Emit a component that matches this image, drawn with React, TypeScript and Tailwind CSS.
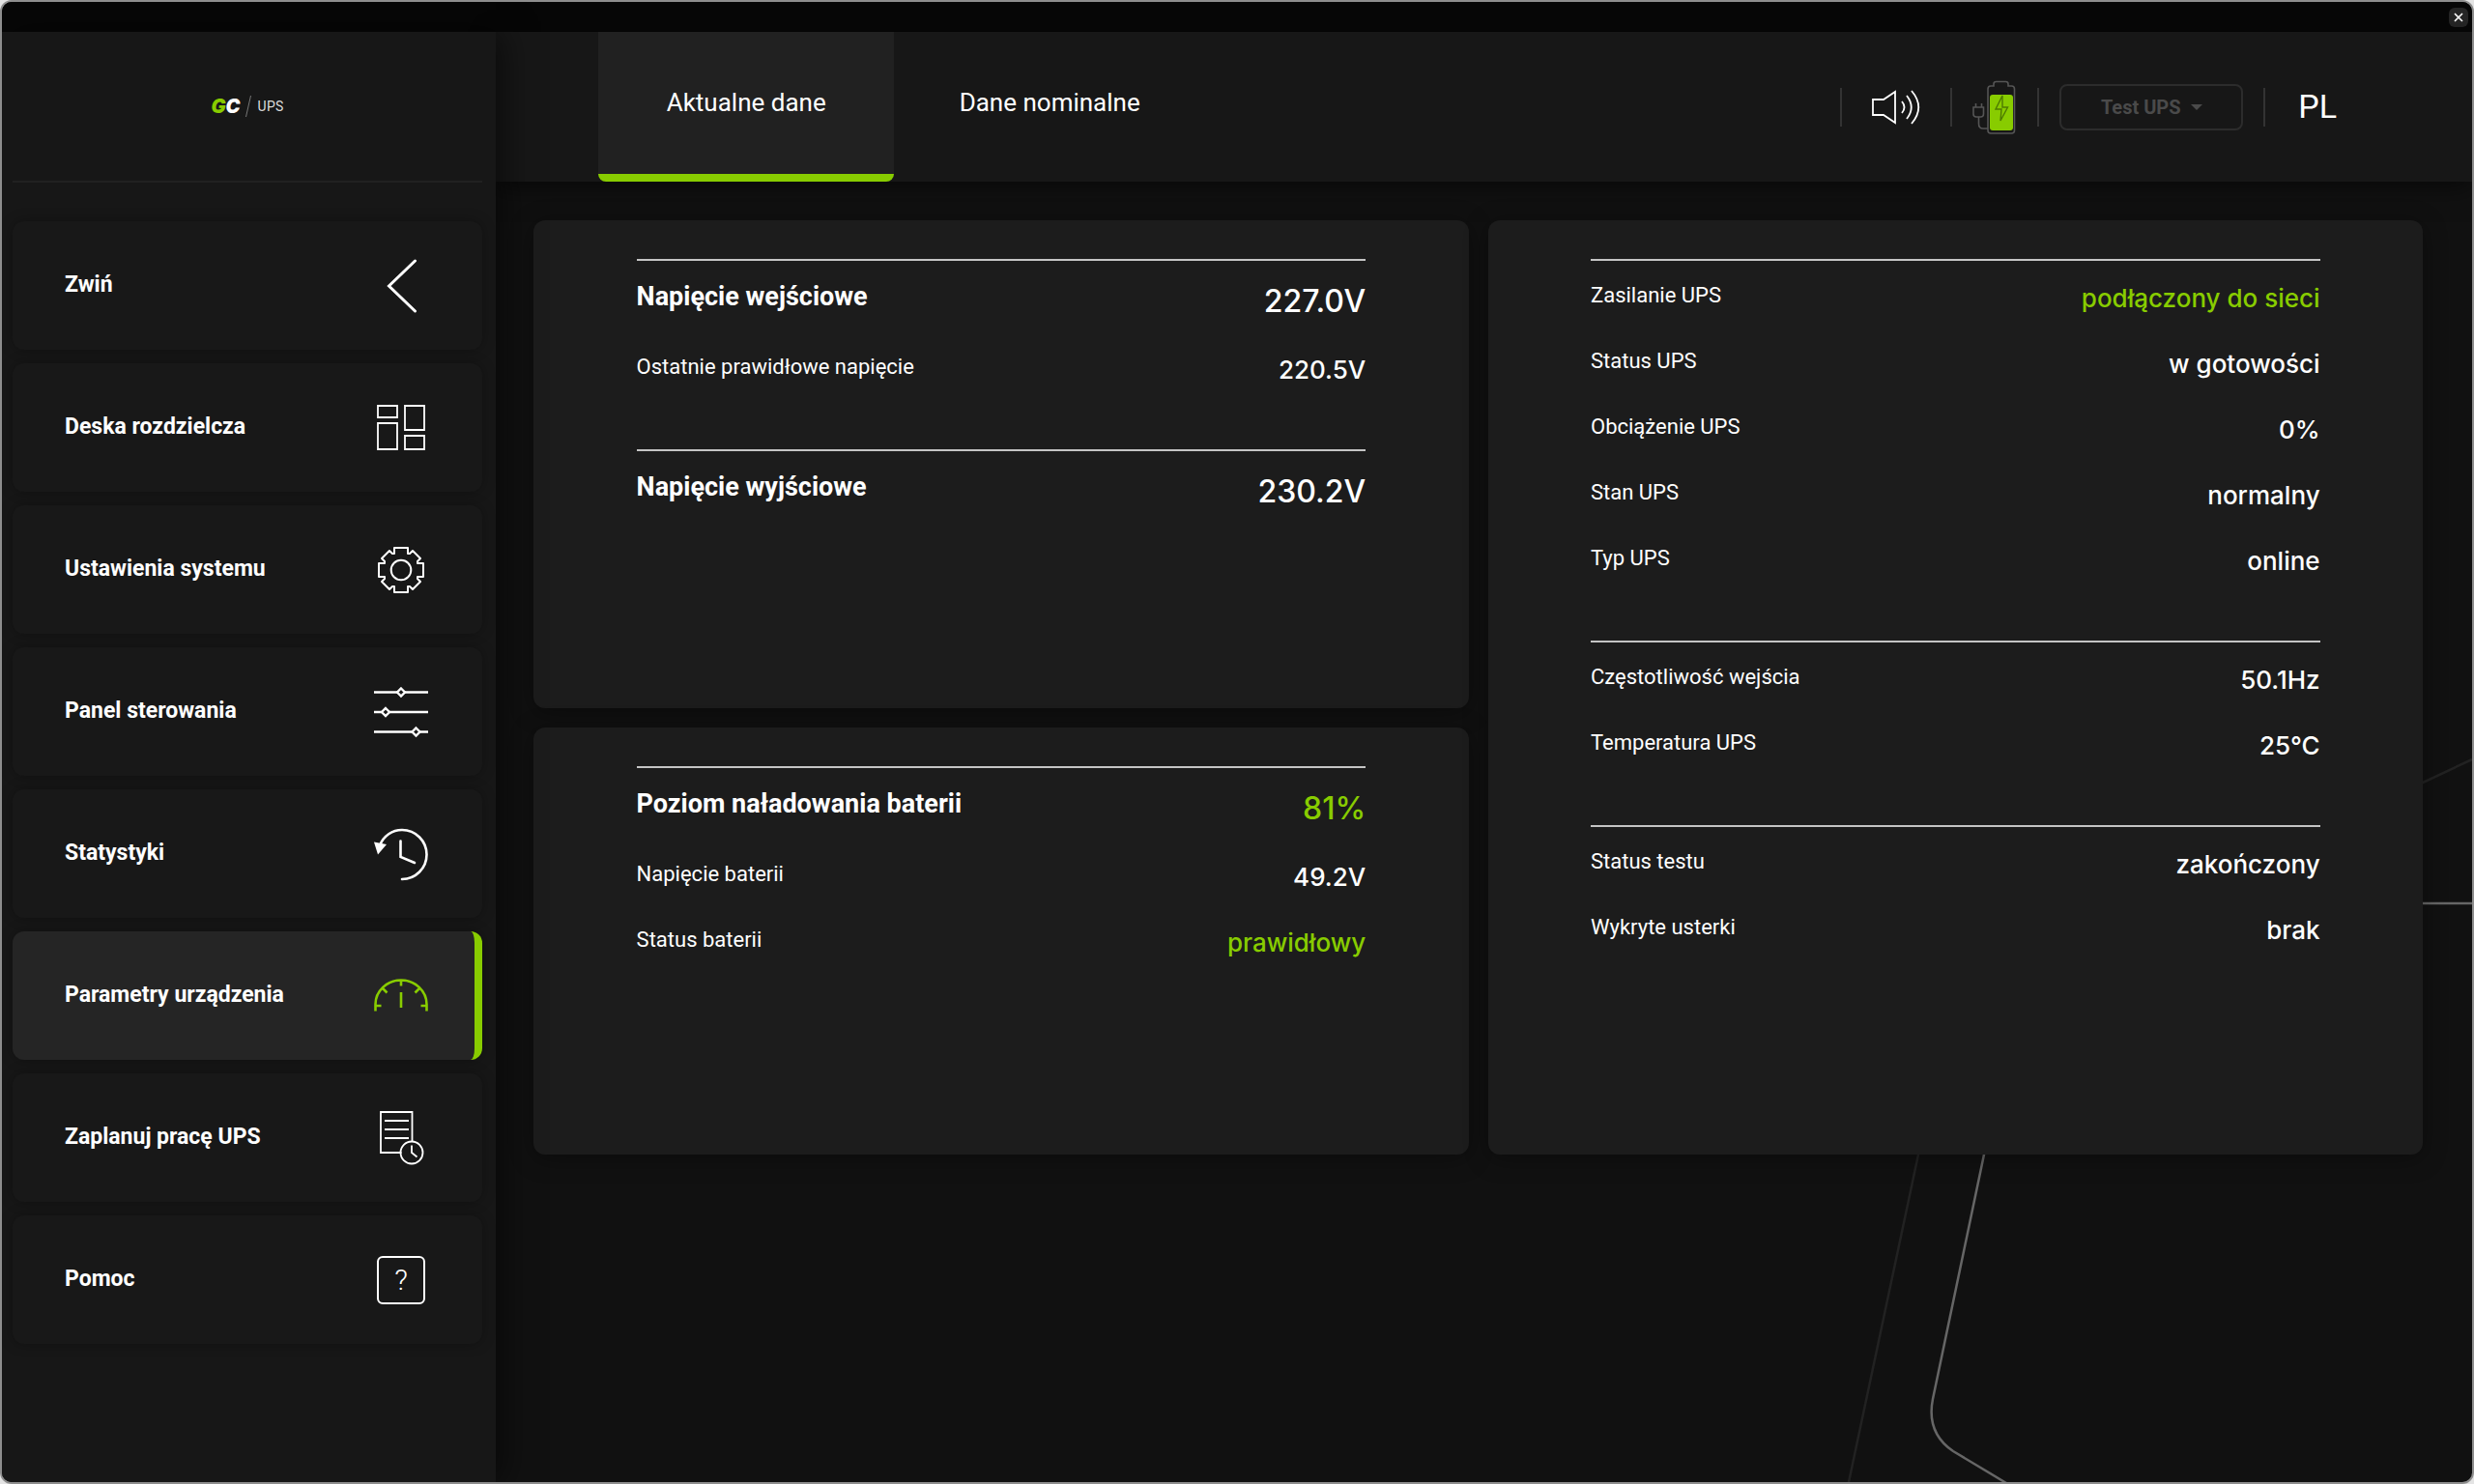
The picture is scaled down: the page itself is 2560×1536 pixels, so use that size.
import clsx from 'clsx'
import type { ReactNode } from 'react'

const navigation = [
  { name: 'Zwiń', icon: <CollapseIcon />, current: false },
  { name: 'Deska rozdzielcza', icon: <DashboardIcon />, current: false },
  { name: 'Ustawienia systemu', icon: <GearIcon />, current: false },
  { name: 'Panel sterowania', icon: <SlidersIcon />, current: false },
  { name: 'Statystyki', icon: <HistoryIcon />, current: false },
  { name: 'Parametry urządzenia', icon: <GaugeIcon />, current: true },
  { name: 'Zaplanuj pracę UPS', icon: <ScheduleIcon />, current: false },
  { name: 'Pomoc', icon: <HelpIcon />, current: false },
]

const tabs = [
  { name: 'Aktualne dane', current: true },
  { name: 'Dane nominalne', current: false },
]

type RowData = { label: string; value: string; title?: boolean; ok?: boolean }

const voltage: RowData[][] = [
  [
    { label: 'Napięcie wejściowe', value: '227.0V', title: true },
    { label: 'Ostatnie prawidłowe napięcie', value: '220.5V' },
  ],
  [{ label: 'Napięcie wyjściowe', value: '230.2V', title: true }],
]

const battery: RowData[][] = [
  [
    { label: 'Poziom naładowania baterii', value: '81%', title: true, ok: true },
    { label: 'Napięcie baterii', value: '49.2V' },
    { label: 'Status baterii', value: 'prawidłowy', ok: true },
  ],
]

const status: RowData[][] = [
  [
    { label: 'Zasilanie UPS', value: 'podłączony do sieci', ok: true },
    { label: 'Status UPS', value: 'w gotowości' },
    { label: 'Obciążenie UPS', value: '0%' },
    { label: 'Stan UPS', value: 'normalny' },
    { label: 'Typ UPS', value: 'online' },
  ],
  [
    { label: 'Częstotliwość wejścia', value: '50.1Hz' },
    { label: 'Temperatura UPS', value: '25°C' },
  ],
  [
    { label: 'Status testu', value: 'zakończony' },
    { label: 'Wykryte usterki', value: 'brak' },
  ],
]

function Icon({ children }: { children: ReactNode }) {
  return (
    <svg className="h-14 w-14 shrink-0" viewBox="0 0 56 56" fill="none" stroke="currentColor" strokeWidth="2" aria-hidden="true">
      {children}
    </svg>
  )
}

function CollapseIcon() {
  return (
    <Icon>
      <path d="M42.500 2 L15.500 28 L42.500 54" strokeWidth="3" strokeLinecap="round" />
    </Icon>
  )
}

function DashboardIcon() {
  return (
    <Icon>
      <path d="M4 5h20v12H4z M4 23h20v27H4z M32 5h20v25H32z M32 36h20v14H32z" strokeWidth="1.800" />
    </Icon>
  )
}

function GearIcon() {
  return (
    <Icon>
      <path d="M21 5h14v6l2 0 3-3 8 8-3 3v2h6v14h-6v2l3 3-8 8-3-3h-2v6H21v-6h-2l-3 3-8-8 3-3v-2H5V21h6v-2l-3-3 8-8 3 3h2z" strokeLinejoin="round" />
      <circle cx="28" cy="28" r="10.300" />
    </Icon>
  )
}

function SlidersIcon() {
  return (
    <Icon>
      <path d="M0 7.500h24M32 7.500h24M0 28h8M16 28h40M0 48.500h39.500M47.500 48.500H56" strokeWidth="2.400" />
      <path d="M28 3.500l4 4-4 4-4-4zM12 24l4 4-4 4-4-4zM43.500 44.500l4 4-4 4-4-4z" strokeWidth="2.400" />
    </Icon>
  )
}

function HistoryIcon() {
  return (
    <Icon>
      <path d="M6 19C10 9 19 3 29 3a25 25 0 0 1 0 51" strokeWidth="2.600" strokeLinecap="round" />
      <path d="M0 15.500l13 2.500-9 10.500z" fill="currentColor" stroke="none" />
      <path d="M27.500 14.500v16.500l14.500 6" strokeWidth="2.600" strokeLinecap="round" />
    </Icon>
  )
}

function GaugeIcon() {
  return (
    <Icon>
      <path d="M1.500 43.500v-7a26.500 25 0 0 1 53 0v7M28 11.500v6M28 24v16M1.500 38h6M48.500 38h6M9.500 20.500l4 4M46.500 20.500l-4 4" strokeWidth="2.600" />
    </Icon>
  )
}

function ScheduleIcon() {
  return (
    <Icon>
      <path d="M28.500 43H7V1h32.500v30M11 10h25M11 19h25M11 28h25" strokeWidth="1.800" />
      <circle cx="39" cy="43" r="11.500" strokeWidth="1.800" />
      <path d="M39 35.500v7.500l5.500 4.500" strokeWidth="1.800" />
    </Icon>
  )
}

function HelpIcon() {
  return (
    <span className="flex h-14 w-14 shrink-0 items-center justify-center">
      <span className="flex h-[50px] w-[50px] items-center justify-center rounded-md border-2 border-white text-[30px] font-light">?</span>
    </span>
  )
}

function SpeakerIcon() {
  return (
    <svg className="h-9 w-13" viewBox="0 0 52 36" fill="none" stroke="white" strokeWidth="1.800" aria-hidden="true">
      <path d="M2 10H13L25 2v32L13 26H2z" />
      <path d="M32 12q5 6 0 12M37 6q9.500 12 0 24M42 1q14.500 17 0 34" />
    </svg>
  )
}

function BatteryIcon() {
  return (
    <svg className="h-14 w-12" viewBox="0 0 48 56" fill="none" aria-hidden="true">
      <path
        d="M17 52V9q0-3 3-3h3V4q0-2.500 2.500-2.500h10Q38 1.500 38 4v2h3.500q3 0 3 3v43q0 3-3 3H20q-3 0-3-3zM17 50h-5q-4.500 0-4.500-5v-7M2 28h10.500v7q0 3-3 3H5q-3 0-3-3zM4.500 28v-4M10.500 28v-4"
        stroke="#555"
        strokeWidth="1.600"
      />
      <rect x="19" y="15" width="24" height="37" rx="3" fill="#88cc00" />
      <path d="M32 16l-7 14H31l-1 12 7.500-14H32z" stroke="#4d7a00" strokeWidth="1.400" />
    </svg>
  )
}

function Logo() {
  return (
    <div className="flex items-center gap-1.5">
      <span className="flex font-['Inter'] text-xl leading-none font-black italic">
        <span className="text-[#88cc00]">G</span>
        <span className="text-white">C</span>
      </span>
      <svg className="h-6 w-1.5" viewBox="0 0 6 24" aria-hidden="true">
        <path d="M5.500 1L.5 23" stroke="#777" strokeWidth="1" />
      </svg>
      <span className="text-sm leading-none tracking-wide text-[#ddd]">UPS</span>
    </div>
  )
}

function Separator() {
  return <span className="h-10 w-0.5 bg-[#333]" />
}

function Row({ label, value, title, ok }: RowData) {
  return (
    <div className={clsx('flex items-center justify-between', title ? 'mb-0.5 h-18' : 'h-17')}>
      <dt className={clsx('pb-0.5', title ? 'text-[27px] font-bold' : 'text-[22px]')}>{label}</dt>
      <dd className={clsx("font-['Inter'] font-medium", title ? 'pt-2 text-[32px]' : 'pt-1 text-[26px]', ok && 'text-[#88cc00]')}>{value}</dd>
    </div>
  )
}

function Card({ groups, className }: { groups: RowData[][]; className?: string }) {
  return (
    <section className={clsx('flex flex-col gap-[51px] rounded-xl bg-[#1c1c1c] px-[11%] pt-10 pb-12 shadow-[0_4px_24px_rgba(0,0,0,0.35)]', className)}>
      {groups.map((rows) => (
        <dl key={rows[0].label} className="border-t-2 border-[#c4c4c4] pt-0.5">
          {rows.map((row) => (
            <Row key={row.label} {...row} />
          ))}
        </dl>
      ))}
    </section>
  )
}

export default function App() {
  return (
    <div className="min-h-screen bg-[#e4e4e4] font-['Roboto',sans-serif] text-white">
      <div className="flex min-h-screen flex-col overflow-hidden rounded-xl border-2 border-[#8e8e8e] bg-[#111]">
        <div className="flex h-[31px] items-center justify-end bg-[#070707] pr-1">
          <button type="button" aria-label="Zamknij" className="flex h-5 w-5 items-center justify-center rounded-md bg-[#262626]">
            <svg className="h-2.5 w-2.5" viewBox="0 0 10 10" stroke="white" strokeWidth="1.600" aria-hidden="true">
              <path d="M1 1l8 8M9 1L1 9" />
            </svg>
          </button>
        </div>
        <div className="flex flex-1">
          <aside className="z-10 w-1/5 shrink-0 bg-[#171717] pr-[14px] pl-[11px] shadow-[8px_0_32px_rgba(0,0,0,0.5)]">
            <div className="flex h-[156px] items-center justify-center border-b-2 border-[#212121]">
              <Logo />
            </div>
            <nav className="mt-10 flex flex-col gap-3.5">
              {navigation.map((item) => (
                <a
                  key={item.name}
                  href="#"
                  aria-current={item.current ? 'page' : undefined}
                  className={clsx(
                    'flex h-[133px] items-center justify-between overflow-hidden rounded-xl pl-[54px] text-[23px] font-bold shadow-[0_0_14px_rgba(0,0,0,0.3)]',
                    item.current ? 'border-r-8 border-[#88cc00] bg-[#252525] pr-[48px]' : 'bg-[#181818] pr-[56px]'
                  )}
                >
                  {item.name}
                  <span className={item.current ? 'text-[#88cc00]' : 'text-white'}>{item.icon}</span>
                </a>
              ))}
            </nav>
          </aside>
          <div className="relative flex flex-1 flex-col">
            <svg className="absolute right-0 bottom-0 h-[760px] w-[660px]" viewBox="0 0 660 760" fill="none" aria-hidden="true">
              <path d="M660 12L609 36L200 210L87 421L15 760" stroke="#222" strokeWidth="2.500" />
              <path d="M660 161H300L155 421L102 674Q95 709 123 728L178 761" stroke="#666" strokeWidth="2.500" />
            </svg>
            <header className="relative flex h-[155px] items-center justify-between bg-[#171717] pr-[140px] pl-[106px] shadow-[0_6px_24px_rgba(0,0,0,0.5)]">
              <div role="tablist" className="flex h-full gap-2">
                {tabs.map((tab) => (
                  <button
                    key={tab.name}
                    type="button"
                    role="tab"
                    aria-selected={tab.current}
                    className={clsx(
                      'w-[306px] overflow-hidden rounded-b-lg border-b-8 text-[26px]',
                      tab.current ? 'border-[#88cc00] bg-[#212121]' : 'border-transparent'
                    )}
                  >
                    {tab.name}
                  </button>
                ))}
              </div>
              <div className="flex items-center">
                <Separator />
                <button type="button" aria-label="Dźwięk" className="mx-[30px]">
                  <SpeakerIcon />
                </button>
                <Separator />
                <span className="mx-5">
                  <BatteryIcon />
                </span>
                <Separator />
                <button type="button" className="mx-[21px] flex h-12 w-[190px] items-center justify-center gap-2.5 rounded-lg border-2 border-[#2c2c2c] text-xl font-bold text-[#4a4a4a]">
                  Test UPS
                  <span className="border-x-6 border-t-6 border-x-transparent border-t-[#4a4a4a]" />
                </button>
                <Separator />
                <button type="button" className="pl-[34px] text-[34px]">
                  PL
                </button>
              </div>
            </header>
            <main className="relative grid grid-cols-2 gap-5 pt-10 pr-[51px] pb-10 pl-[39px]">
              <div className="flex flex-col gap-5">
                <Card groups={voltage} className="min-h-[505px]" />
                <Card groups={battery} className="flex-1" />
              </div>
              <Card groups={status} className="min-h-[967px]" />
            </main>
          </div>
        </div>
      </div>
    </div>
  )
}
